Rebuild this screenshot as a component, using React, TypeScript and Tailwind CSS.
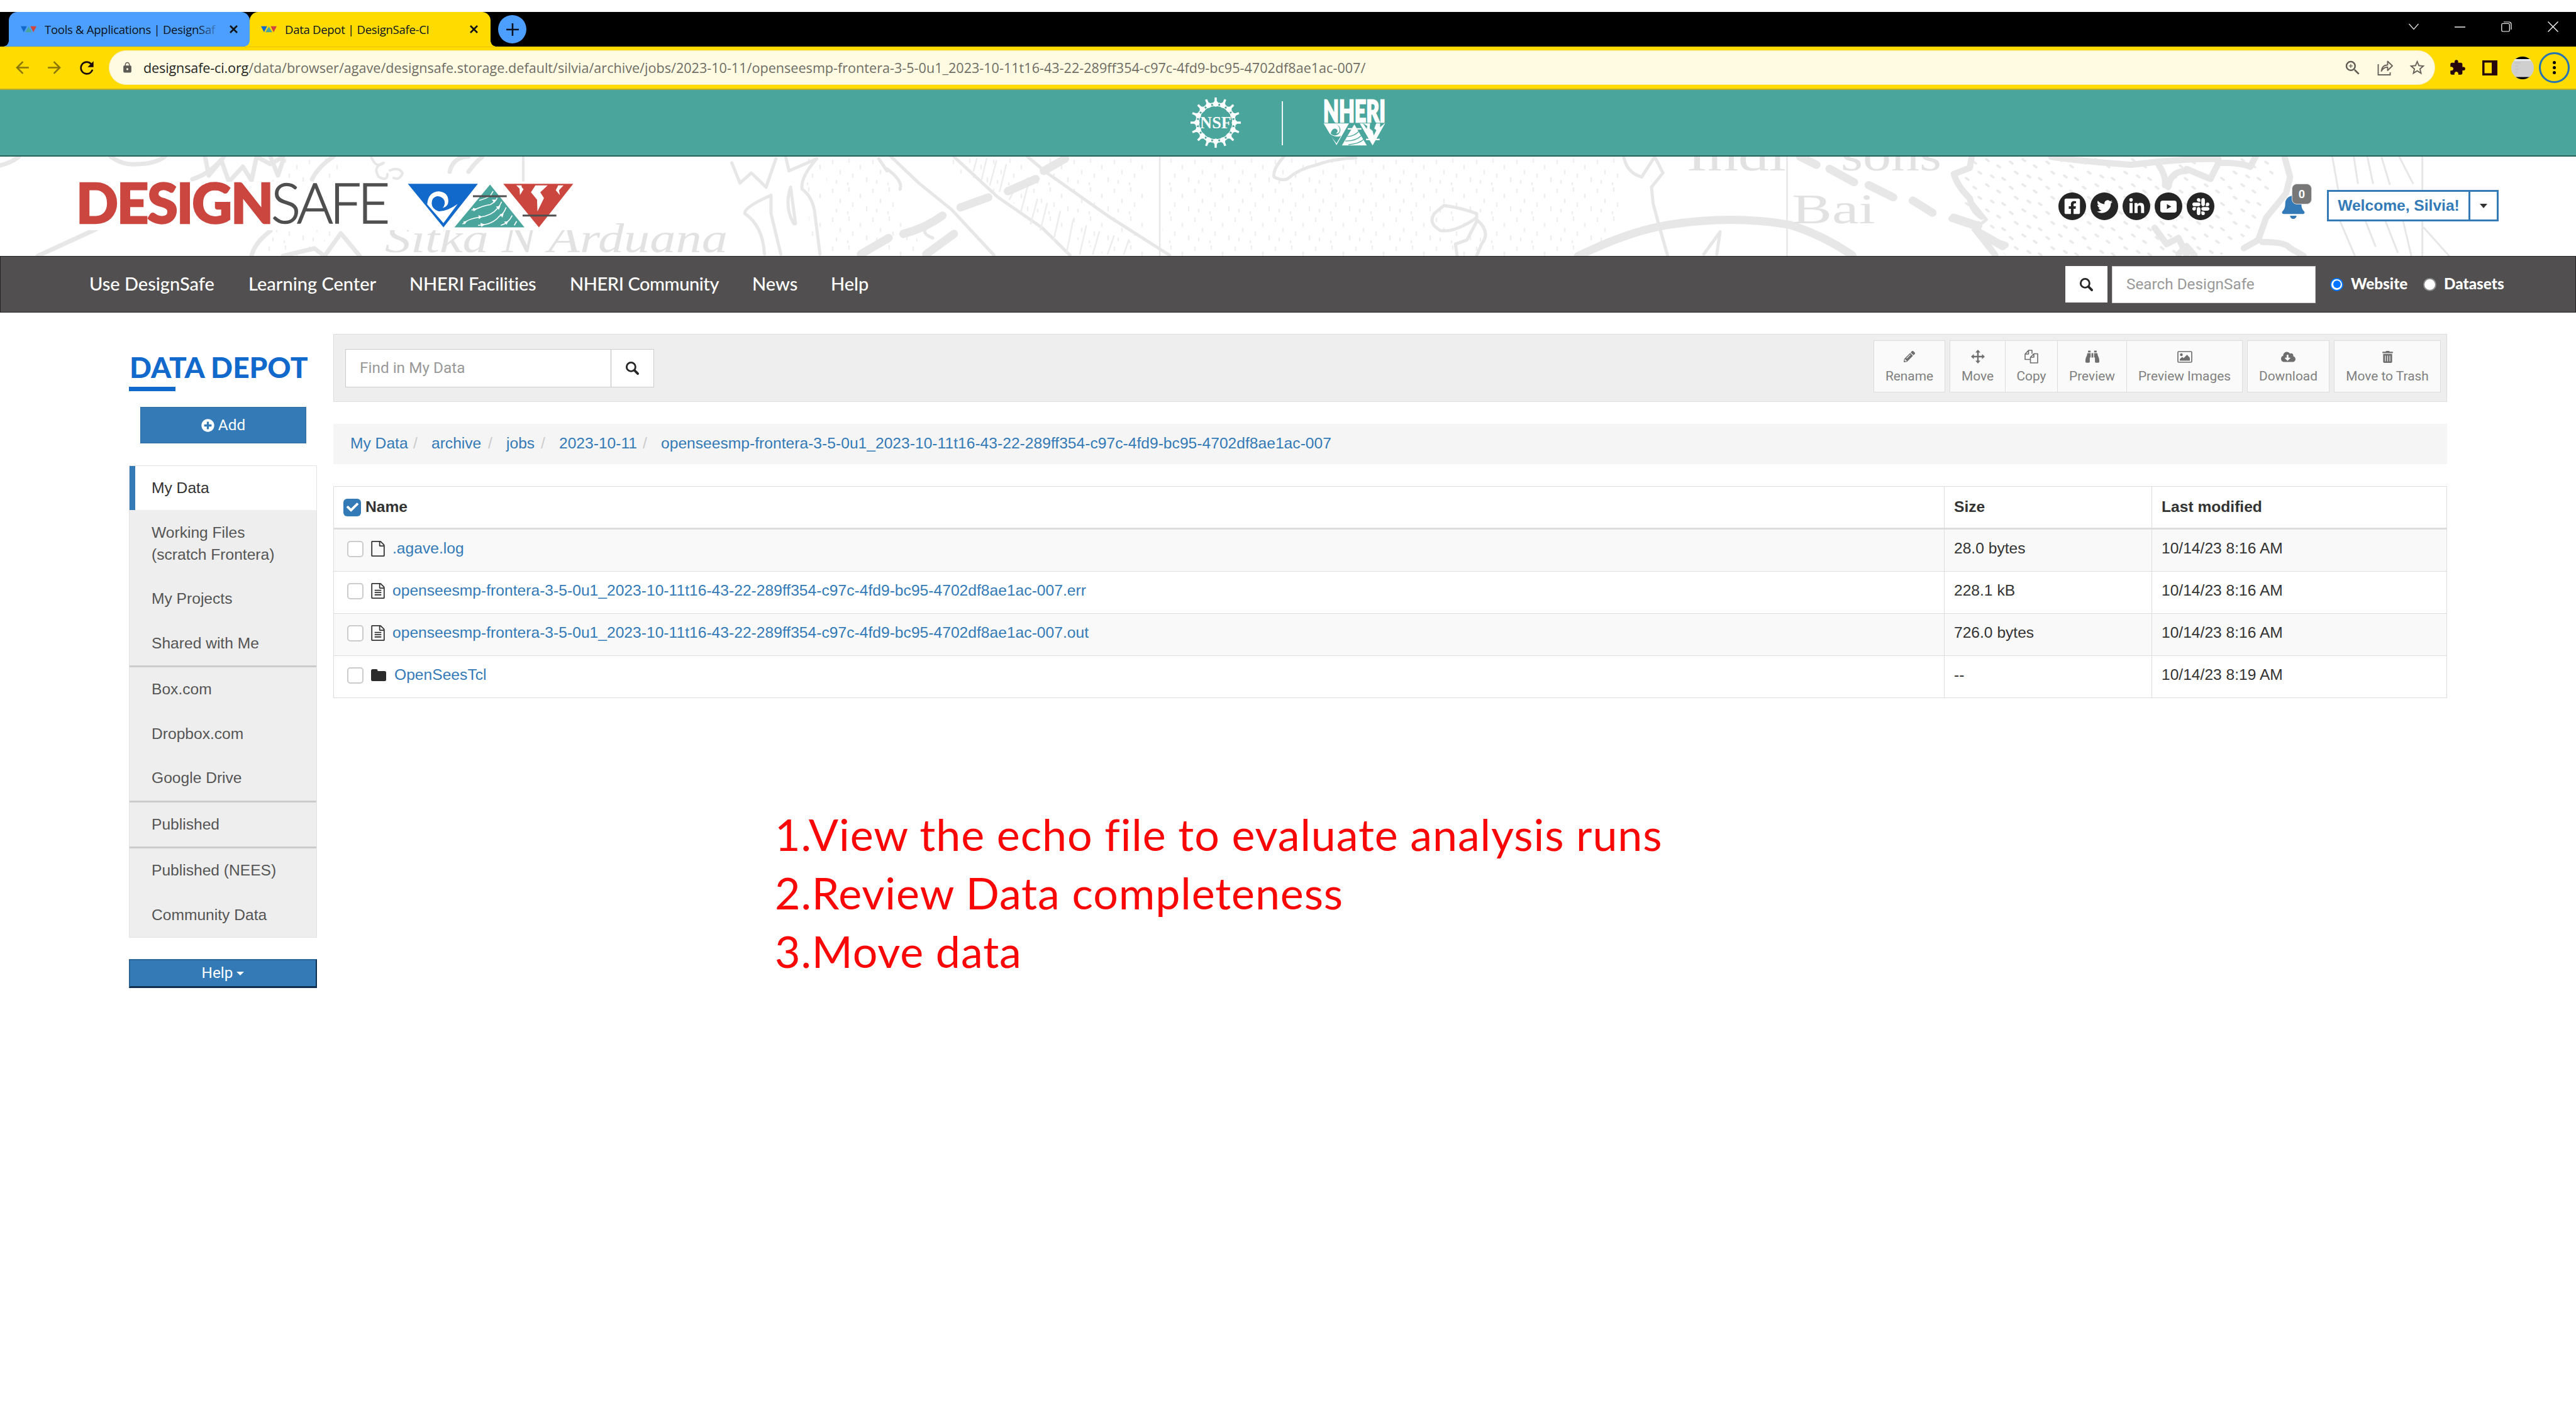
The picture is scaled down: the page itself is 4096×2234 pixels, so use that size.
import React from "react";
import { FaTwitter, FaSlack, FaBell, FaBinoculars, FaPlusCircle, FaCloudDownloadAlt, FaTrashAlt, FaPencilAlt, FaFacebookSquare, FaLinkedinIn, FaCheck } from "react-icons/fa";
import { MdExtension, MdLock, MdRefresh, MdStarBorder, MdZoomIn, MdArrowBack, MdArrowForward } from "react-icons/md";

const LONG = "openseesmp-frontera-3-5-0u1_2023-10-11t16-43-22-289ff354-c97c-4fd9-bc95-4702df8ae1ac-007";

const FILE_O =
  "M1596 380q28 28 48 76t20 88v1152q0 40-28 68t-68 28h-1344q-40 0-68-28t-28-68v-1600q0-40 28-68t68-28h896q40 0 88 20t76 48zm-444-244v376h376q-10-29-22-41l-313-313q-12-12-41-22zm384 1528v-1024h-416q-40 0-68-28t-28-68v-416h-768v1536h1280z";
const FILE_LINES =
  "m-1024-864q0-14 9-23t23-9h704q14 0 23 9t9 23v64q0 14-9 23t-23 9h-704q-14 0-23-9t-9-23v-64zm736 224q14 0 23 9t9 23v64q0 14-9 23t-23 9h-704q-14 0-23-9t-9-23v-64q0-14 9-23t23-9h704zm0 256q14 0 23 9t9 23v64q0 14-9 23t-23 9h-704q-14 0-23-9t-9-23v-64q0-14 9-23t23-9h704z";

function SearchIcon() {
  return (
    <svg className="size-[23px]" viewBox="0 0 24 24" fill="none" stroke="#262626" strokeLinecap="round">
      <circle cx="9.8" cy="9.8" r="7.3" strokeWidth="3" />
      <path d="M15.8 15.8 21 21" strokeWidth="4" />
    </svg>
  );
}

function Favicon({ className = "" }: { className?: string }) {
  return (
    <svg className={"h-[11px] w-[25px] " + className} viewBox="0 0 36 14">
      <path d="M0 0h14L7 14z" fill="#1269cc" />
      <path d="M18 1l8 13H10z" fill="#4ba69c" />
      <path d="M22 0h14l-7 14z" fill="#d1453f" />
    </svg>
  );
}

function CloseX() {
  return (
    <svg className="size-[13px]" viewBox="0 0 13 13" stroke="#111" strokeWidth="2.6">
      <path d="M1 1l11 11M12 1L1 12" />
    </svg>
  );
}

function TabStrip() {
  return (
    <div className="flex h-[55px] bg-black font-['Open_Sans'] text-[18.5px] tracking-[-0.27px] text-[#0b1220]">
      <div className="relative ml-[14px] flex h-full w-[383px] items-center rounded-t-[14px] bg-[#4d9fff]">
        <span className="absolute -left-[9px] bottom-0 size-[9px] bg-[radial-gradient(circle_at_0_0,#000_8.5px,#4d9fff_9px)]" />
        <Favicon className="ml-[19px]" />
        <span className="relative ml-[13px] w-[277px] overflow-hidden whitespace-nowrap leading-[30px]">
          Tools &amp; Applications | DesignSaf
          <span className="absolute inset-y-0 right-0 w-[34px] bg-linear-to-r from-[#4d9fff]/0 to-[#4d9fff]/90" />
        </span>
        <span className="ml-[17px]">
          <CloseX />
        </span>
      </div>
      <div className="relative flex h-full w-[383px] items-center rounded-t-[14px] bg-[#ffdb00]">
        <span className="absolute -left-[9px] bottom-0 size-[9px] bg-[radial-gradient(circle_at_0_0,#4d9fff_8.5px,#ffdb00_9px)]" />
        <span className="absolute -right-[9px] bottom-0 size-[9px] bg-[radial-gradient(circle_at_100%_0,#000_8.5px,#ffdb00_9px)]" />
        <Favicon className="ml-[18px]" />
        <span className="ml-[13px] w-[274px] whitespace-nowrap leading-[30px]">Data Depot | DesignSafe-CI</span>
        <span className="ml-[20px]">
          <CloseX />
        </span>
      </div>
      <div className="ml-[12px] mt-[5px] flex size-[45px] items-center justify-center rounded-full bg-[#4d9fff]">
        <svg className="size-[20px]" viewBox="0 0 20 20" stroke="#0b1220" strokeWidth="2.6">
          <path d="M10 0v20M0 10h20" />
        </svg>
      </div>
      <div className="ml-auto mr-[28px] flex h-[47px] items-center gap-[57px]">
        <svg className="h-[11px] w-[16px]" viewBox="0 0 16 11" fill="none" stroke="#ddd" strokeWidth="1.4"><path d="M.5 1 8 9.5 15.500 1" /></svg>
        <svg className="h-[2px] w-[17px]" viewBox="0 0 17 2" stroke="#fff" strokeWidth="1.4"><path d="M0 1h17" /></svg>
        <svg className="size-[17px]" viewBox="0 0 17 17" fill="none" stroke="#fff" strokeWidth="1.2"><rect x=".8" y="3.500" width="12.500" height="12.500" rx="1.800" /><path d="M4 1h8.500a3.500 3.500 0 0 1 3.500 3.500V13" /></svg>
        <svg className="size-[17px]" viewBox="0 0 17 17" stroke="#fff" strokeWidth="1.3"><path d="M.5.5l16 16M16.500.5l-16 16" /></svg>
      </div>
    </div>
  );
}

function AddressBar() {
  return (
    <div className="flex h-[69px] items-center border-y border-t-[#e6c500] border-b-2 border-b-[#b9ab30] bg-[#ffdb00] pb-px">
      <MdArrowBack className="ml-[20px] size-[31px] text-[#8a7705]" />
      <MdArrowForward className="ml-[20px] size-[31px] text-[#8a7705]" />
      <MdRefresh className="ml-[20px] size-[32px] text-[#1a0a05]" />
      <div className="ml-[19px] flex h-[55px] w-[3699px] items-center rounded-full border border-[#f5ecb0] bg-[#fffbe3]">
        <MdLock className="ml-[19px] size-[19px] text-[#5b5a55]" />
        <div className="ml-[16px] whitespace-nowrap font-['Open_Sans'] text-[21.600px] leading-[40px] text-[#6f6d63]">
          <span className="tracking-[-0.15px] text-[#26251f]">designsafe-ci.org</span>
          /data/browser/agave/designsafe.storage.default/silvia/archive/jobs/2023-10-11/openseesmp-frontera-3-5-0u1_2023-10-11t16-43-22-289ff354-c97c-4fd9-bc95-4702df8ae1ac-007/
        </div>
        <MdZoomIn className="ml-auto size-[30px] text-[#5e5c54]" />
        <svg className="ml-[24px] size-[25px]" viewBox="0 0 25 25" fill="none" stroke="#66645b" strokeWidth="1.900">
          <path d="M1.500 7v17h19v-4" />
          <path d="M6.500 18c.7-6.500 4-9.500 10-9.700V2.500l7.500 7.200-7.500 7.300v-5.300c-4.500 0-7.500 1.800-10 6.300z" strokeLinejoin="round" />
        </svg>
        <MdStarBorder className="ml-[24px] mr-[13px] size-[29px] text-[#66645b]" />
      </div>
      <MdExtension className="ml-[22px] size-[27px] text-[#26060c]" />
      <svg className="ml-[26px] size-[24px]" viewBox="0 0 24 24"><path fillRule="evenodd" d="M0 0h24v24H0zM3.500 3.500v17H15v-17z" fill="#26060c" /></svg>
      <svg className="ml-[22px] size-[36px]" viewBox="0 0 36 36">
        <clipPath id="avatar"><circle cx="18" cy="18" r="18" /></clipPath>
        <g clipPath="url(#avatar)">
          <path d="M0 0h36v36H0z" fill="#cfcfcf" />
          <path d="M0 0h36v4H0zM0 32.500h36V36H0z" fill="#000" />
          <path d="M0 4h36v2.500H0z" fill="#eef3fb" />
          <path d="M5 10h10M6 15h5M6 20h6M6 25h4" stroke="#bdbdbd" />
        </g>
      </svg>
      <div className="ml-[8px] flex size-[49px] flex-col items-center justify-center gap-[3px] rounded-full border-[3px] border-[#2474b5]">
        <span className="size-[5px] rounded-full bg-black" />
        <span className="size-[5px] rounded-full bg-black" />
        <span className="size-[5px] rounded-full bg-black" />
      </div>
    </div>
  );
}

const teeth = Array.from({ length: 16 }, (_, i) => i * 22.5);

function SponsorBar() {
  return (
    <div className="flex h-[106px] items-start border-b-2 border-[#25605a] bg-[#4aa59c]">
      <svg className="ml-[1893px] mt-[12px] size-[80px]" viewBox="-41 -41 82 82" fill="#fff">
        {teeth.map((a) => (
          <g key={a} transform={`rotate(${a})`}>
            <path d="M-5-30Q-4-33.500-1.900-35L-1.700-41h3.400L1.900-35Q4-33.500 5-30L3-27 0-26-3-27z" />
          </g>
        ))}
        <circle r="32" fill="none" stroke="#fff" strokeWidth="1.600" />
        <circle r="27.500" fill="none" stroke="#fff" strokeWidth="1.200" />
        <text y="9.500" textAnchor="middle" textLength="51" lengthAdjust="spacingAndGlyphs" fontFamily="Liberation Serif" fontWeight="700" fontSize="29">NSF</text>
      </svg>
      <div className="ml-[65px] mt-[18px] h-[70px] w-[2px] bg-white/90" />
      <svg className="ml-[64px] mt-[15px] h-[74px] w-[99px] overflow-visible" viewBox="0 0 300 224" fill="#fff">
        <text x="0" y="108" textLength="300" lengthAdjust="spacingAndGlyphs" fontFamily="Lato" fontWeight="900" fontSize="144" stroke="#fff" strokeWidth="7">NHERI</text>
        <path d="M2 116h122L64 220z" />
        <circle cx="56" cy="147" r="27" fill="#4aa59c" />
        <path d="M24 160l40 52 22-36q-30 12-62-16z" fill="#4aa59c" />
        <path d="M37 168a27 27 0 1 1 42-20q0 16-18 16 12-8 6-18-8-10-20-2-12 12-10 24z" fill="#fff" />
        <path d="M150 120l60 102H90z" />
        <path d="M118 142h66" stroke="#fff" strokeWidth="7" />
        <path d="M116 178q30 2 58-26M106 200q50 2 78-26M122 218q50-4 72-24" stroke="#4aa59c" strokeWidth="4" fill="none" />
        <path d="M176 116h122L238 222z" />
        <path d="M190 114l22 14-2 14zM226 114l30 0-10 26 10 8-12 26-6-22-14-12zM274 114l22 2-22 18z" fill="#4aa59c" />
        <path d="M206 193h66" stroke="#fff" strokeWidth="7" />
      </svg>
    </div>
  );
}

function MapBackdrop() {
  return (
    <svg className="absolute inset-0 h-full w-full" viewBox="0 0 4096 158" fill="none" stroke="#e7e7e7" strokeLinejoin="round" strokeLinecap="round">
      <defs>
        <pattern id="dashes" width="64" height="46" patternUnits="userSpaceOnUse">
          <path d="M6 4v5M24 14v5M44 6v5M56 22v5M12 28v5M34 34v6M50 38v4M4 42v3" stroke="#efefef" strokeWidth="2.500" />
        </pattern>
        <pattern id="dots" width="58" height="40" patternUnits="userSpaceOnUse">
          <path d="M6 8l4 3M26 4l4 3M44 14l4 3M14 24l4 3M34 30l4 3M52 34l4 3" stroke="#eaeaea" strokeWidth="3.500" />
        </pattern>
      </defs>
      <path d="M1312 0h100l0 40 60 118h-150zM1850 0h730l-6 40 4 70-40 48h-690zM1480 0h340v158h-60z" fill="url(#dashes)" stroke="none" />
      <path d="M430 0h110v120l-60 38h-70zM1280 0h30v158h-20z" fill="url(#dashes)" stroke="none" />
      <path d="M3110 40l30-40h480l-10 50-20 60-60 48h-340l-60-60z" fill="url(#dots)" stroke="none" />
      <g strokeWidth="7">
        <path d="M0 14Q18 10 30 0M176 0q20 14 40 12q30 0 46-12M60 158l100-46M400 158q4-20 30-40M450 158l50-12 16 12 26-36 30 36M306 36q30-10 50-36M326 0l6 30 20-24 12 34 22-24 14 22 8-38 22 12 20-12M430 0l12 30 8-24M496 36q10-20 34-36M715 24q6-24 30-24M745 24q10-14 22-24" />
        <path d="M590 0q8 20 20 10-18 6-8 22 14 8 14-4M620 22q14-6 20 4-4 12-14 8M832 0v38" strokeWidth="4" />
      </g>
      <g transform="matrix(1.2987 0 0 .323 1163.6 -16)">
        <g strokeWidth="5">
          <path vectorEffect="non-scaling-stroke" d="M0 80l10 100 14-50 18 70 12-140M66 50l4 70 34-60q-20 90-18 150 14 40 16 130l6 190M48 240q-34 60-32 90 22 60 24 200M48 240l0 90 12 200M72 200l6 180M72 200q-8 100 4 180" />
          <path vectorEffect="non-scaling-stroke" d="M195 50l34 130 40 130 52 225M272 50l54 200 54 150 34 135M362 50l24 80 74 210 76 195M180 60l10 60M190 110q20 60 16 100M246 380q-20 40 0 70" />
          <path vectorEffect="non-scaling-stroke" d="M676 50q-14 60-12 100 10 20 16 10 14-50 36-70 20-30 48-34M872 290l-12 40q-8 50 8 84 18 10 44-64M872 290q20 10 40 40v40l-12 90-14 20 2 58M912 360q18 60 6 120l-6 58" />
          <path vectorEffect="non-scaling-stroke" d="M1092 50q4 80 22 100l16-100M1130 50l10 80-14 70 2 80 6 90 12 170M1190 530l20-110-4 110" />
          <path vectorEffect="non-scaling-stroke" d="M1520 50l-4 60-18 20q0 60 12 100l26 130-16 50 26 130" />
        </g>
        <g strokeWidth="2.500">
          <path vectorEffect="non-scaling-stroke" d="M524 50v490M1292 50v490" />
          <path vectorEffect="non-scaling-stroke" d="M300 60l-4 60M312 60l-6 100M324 70l-8 120M336 90l-8 130M350 180l-10 80M362 200l-8 120M374 260l-8 120M386 280l-8 130M402 320l-8 140M418 360l-8 160M434 390l-8 140M450 420l-8 110M468 440l-8 90M486 460l-6 70" stroke="#ededed" />
        </g>
        <g strokeWidth="13">
          <path vectorEffect="non-scaling-stroke" d="M408 60l-26 60M372 160l-34 60M314 250l-34 50M258 340q-20 60-48 90M192 450l-34 80M272 430l-34 100M1036 540q60-120 110-154 80-50 150 0 40 50 76 150M1308 50l20 40M1344 110l30 66M1392 190l30 60M1446 266l24 60M1496 350l30 40M1530 430l26 60" />
        </g>
      </g>
      <g transform="matrix(.6334 0 0 .323 3103 -16)" strokeWidth="10">
        <path vectorEffect="non-scaling-stroke" d="M50 55l-4 50-40 30q8 60 40 120 6 60 30 90M0 355l60 40 26 60 50 30M60 395l20 60 30 80M250 50q60 20 200 40 120-30 220-30M520 90q20 60 16 100M590 120q-40 0-46 80M590 110l60 50 20-80q60 0 80 20l16-60M836 50l14 100-10 80-50 120-20 110-36 40M780 470q60 0 70 30l34 38M510 400l30 80 30-30 20 85M570 530l20-40 20 45" />
        <path vectorEffect="non-scaling-stroke" strokeWidth="3" d="M956 50l18 200M1010 50l10 130M1044 50l14 130M1080 55l20 130M1124 50l34 130M1182 50v490M976 370l36 165M1040 370l24 120M1090 370l30 150M1134 370l20 165M1186 400l64 140" />
      </g>
      <g stroke="none" fill="#e2e2e2" fontFamily="Liberation Serif">
        <text x="612" y="152" fontSize="66" fontStyle="italic" textLength="545" lengthAdjust="spacingAndGlyphs">Sitka N Arduana</text>
        <text x="2682" y="22" fontSize="72" textLength="158" lengthAdjust="spacingAndGlyphs">Indi</text>
        <text x="2927" y="22" fontSize="72" textLength="160" lengthAdjust="spacingAndGlyphs">sons</text>
        <text x="2849" y="106" fontSize="68" textLength="133" lengthAdjust="spacingAndGlyphs">Bai</text>
      </g>
    </svg>
  );
}

function LogoMark() {
  return (
    <svg className="h-[77px] w-[301px] shrink-0" viewBox="0 54 930 238">
      <path d="M57 64h344L232 278z" fill="#1269cc" />
      <path d="M152 165q4-60 56-64 48 4 48 48 0 26-28 34 16-20 8-38-12-22-36-20-26 6-26 36 2 28 34 38 40 2 94-36l-70 94z" fill="#fff" />
      <path d="M461 68l169 210H286z" fill="#4aa59c" />
      <g stroke="#fff" strokeWidth="5" fill="none">
        <path d="M370 193q20-2 40-12 30-12 52-14 28-16 34-34M408 146q30-8 54-22l14-24M326 262q30-28 86-34 60-10 84-42 14-14 22-34M402 268q70-2 104-44 24-14 34-44M514 268q36-8 56-48M580 268l12-20" />
      </g>
      <path d="M376 182l22 6-18 12zM470 142l18 0-6 16zM330 248l16 2-10 14zM404 218l18 8-16 12zM490 176l22-4-8 20zM414 256l22 8-18 12zM508 214l20-4-6 20zM530 250l20-2-8 18z" fill="#fff" />
      <path d="M526 64h344L701 278z" fill="#cb463f" />
      <path d="M590 72h26q-2 10 10 18l-18 30-2-32zM684 72h60l-36 34 18 28-32 66-2-58-30-36zM796 72h26l-22 24 4 24-20-24z" fill="#fff" />
      <path d="M377 125h166M621 220h166" stroke="#4f4f4f" strokeWidth="9" />
    </svg>
  );
}

function Social({ children }: { children: React.ReactNode }) {
  return <span className="flex size-[44px] items-center justify-center rounded-full bg-[#252525] text-white">{children}</span>;
}

function Header() {
  return (
    <div className="relative flex h-[158px] items-start bg-white">
      <MapBackdrop />
      <div className="relative ml-[121px] mt-[40px] flex h-[77px] w-[810px] shrink-0 items-start whitespace-nowrap bg-white font-['Lato'] text-[88px] leading-[64px]">
        <span className="w-[310px] shrink-0 font-black tracking-[-2.100px] text-[#cb463f] [-webkit-text-stroke:2.500px_#cb463f]">DESIGN</span>
        <span className="w-[199px] shrink-0 font-light tracking-[-5.200px] text-[#4f4f4f] [-webkit-text-stroke:1.500px_#4f4f4f]">SAFE</span>
        <LogoMark />
      </div>
      <div className="relative ml-auto mr-[123px] flex items-start">
        <div className="mt-[57px] flex gap-[7px]">
          <Social><FaFacebookSquare className="size-[28px]" /></Social>
          <Social><FaTwitter className="size-[25px]" /></Social>
          <Social><FaLinkedinIn className="size-[27px]" /></Social>
          <Social>
            <svg className="h-[19px] w-[26px]" viewBox="0 0 26 19"><path fillRule="evenodd" d="M4 0h18q4 0 4 4v11q0 4-4 4H4q-4 0-4-4V4q0-4 4-4zm6.500 5.500v8l7-4z" fill="#fff" /></svg>
          </Social>
          <Social><FaSlack className="size-[31px]" /></Social>
        </div>
        <div className="relative ml-[105px] mt-[58px]">
          <FaBell className="size-[41px] text-[#337ab7]" />
          <span className="absolute -top-[15px] left-[18px] flex h-[33px] w-[32px] items-center justify-center rounded-[8px] border border-[#ddd] bg-[#777] font-['Roboto'] text-[18px] font-bold text-white">0</span>
        </div>
        <div className="ml-[33px] mt-[53px] flex h-[50px] w-[273px] border-[3px] border-[#337ab7] bg-white">
          <span className="flex w-[225px] items-center justify-center border-r-[3px] border-[#337ab7] font-['Liberation_Sans'] text-[24.600px] font-bold text-[#337ab7]">Welcome, Silvia!</span>
          <span className="flex flex-1 items-center justify-center">
            <svg className="h-[7px] w-[12px]" viewBox="0 0 12 7"><path d="M0 0h12L6 7z" fill="#333" /></svg>
          </span>
        </div>
      </div>
    </div>
  );
}

function NavBar() {
  return (
    <div className="flex h-[90px] items-center border border-[#262324] bg-[#524f50] font-['Lato'] text-white">
      <nav className="mb-[2px] ml-[141px] flex whitespace-nowrap text-[29px] font-medium leading-[40px]">
        <span className="w-[253px]">Use DesignSafe</span>
        <span className="w-[256px]">Learning Center</span>
        <span className="w-[255px] tracking-[-0.170px]">NHERI Facilities</span>
        <span className="w-[290px] tracking-[-0.430px]">NHERI Community</span>
        <span className="w-[125px]">News</span>
        <span>Help</span>
      </nav>
      <div className="ml-auto flex items-center whitespace-nowrap text-[24.300px] font-black">
        <span className="flex h-[58px] w-[67px] items-center justify-center bg-white"><SearchIcon /></span>
        <span className="ml-[7px] flex h-[59px] w-[324px] items-center border border-[#ccc] bg-white pl-[22px] font-['Roboto'] font-normal text-[#999]">Search DesignSafe</span>
        <span className="ml-[23px] flex size-[21px] items-center justify-center rounded-full border-[2.500px] border-[#0075ff] bg-white"><span className="size-[12px] rounded-full bg-[#0075ff]" /></span>
        <span className="mb-[2px] ml-[12px] w-[90px]">Website</span>
        <span className="ml-[25px] size-[21px] rounded-full border-2 border-[#8a8a8a] bg-white" />
        <span className="mb-[2px] ml-[12px] mr-[113px] w-[96px]">Datasets</span>
      </div>
    </div>
  );
}

const groups = [
  ["My Data", "Working Files\n(scratch Frontera)", "My Projects", "Shared with Me"],
  ["Box.com", "Dropbox.com", "Google Drive"],
  ["Published"],
  ["Published (NEES)", "Community Data"],
];

function Sidebar() {
  return (
    <aside className="w-[299px] pt-[62px]">
      <h1 className="whitespace-nowrap pl-px font-['Lato'] text-[46px] font-black leading-[50px] text-[#1269cc]">DATA DEPOT</h1>
      <div className="mt-[6px] h-[7px] w-[74px] bg-[#1269cc]" />
      <div className="ml-[18px] mt-[25px] flex h-[58px] w-[264px] items-center justify-center gap-[6px] border border-[#2e6da4] bg-[#337ab7] font-['Roboto'] text-[24.300px] text-white">
        <FaPlusCircle className="size-[21px]" />
        Add
      </div>
      <div className="mt-[35px] border border-[#e3e3e3] bg-[#eee] font-['Liberation_Sans'] text-[24.600px] leading-[35.300px] text-[#555]">
        {groups.map((g, i) => (
          <div key={i} className={i ? "border-t-[3px] border-[#ccc]" : ""}>
            {g.map((t) => (
              <div
                key={t}
                className={
                  "whitespace-pre border-l-[9px] pb-[18px] pl-[26px] pt-[17.200px] " +
                  (t === "My Data" ? "border-[#337ab7] bg-white text-[#333]" : "border-transparent")
                }
              >
                {t}
              </div>
            ))}
          </div>
        ))}
      </div>
      <div className="mt-[34px] flex h-[46px] items-center justify-center gap-[6px] border-2 border-b-[3px] border-b-[#0d2f4d] border-l-[#2a6394] border-r-[#0d2f4d] border-t-[#2a6394] bg-[#337ab7] font-['Roboto'] text-[24.300px] text-white">
        Help
        <svg className="h-[6px] w-[12px]" viewBox="0 0 12 6"><path d="M0 0h12L6 6z" fill="#fff" /></svg>
      </div>
    </aside>
  );
}

function Tool({ icon, label, className }: { icon: React.ReactNode; label: string; className: string }) {
  return (
    <div className={"flex h-[83px] flex-col items-center border border-[#ddd] bg-[#fafafa] pt-[14px] font-['Roboto'] text-[20.900px] text-[#808080] " + className}>
      <span className="flex h-[22px] items-center text-[#6e6e6e]">{icon}</span>
      <span className="mt-[7px] whitespace-nowrap leading-[26px]">{label}</span>
    </div>
  );
}

function MoveIcon() {
  return (
    <svg className="size-[22px]" viewBox="0 0 22 22" fill="currentColor">
      <path d="M11 0l4 4.500h-2.800v5.300h5.300V7L22 11l-4.500 4v-2.800h-5.300v5.300H15L11 22l-4-4.500h2.800v-5.300H4.500V15L0 11l4.500-4v2.800h5.300V4.500H7z" />
    </svg>
  );
}

function CopyIcon() {
  return (
    <svg className="size-[22px]" viewBox="0 0 22 22" fill="none" stroke="currentColor" strokeWidth="1.600" strokeLinejoin="round">
      <path d="M9 15.500H1V7l5.500-6H12v5.500M6.500 1v6H1M9.500 21h11.500V6.500h-6L9.500 12zM15 6.500V12H9.500" />
    </svg>
  );
}

function PictureIcon() {
  return (
    <svg className="h-[19px] w-[24px]" viewBox="0 0 24 19">
      <rect x="1" y="1" width="22" height="17" rx="1.500" fill="none" stroke="currentColor" strokeWidth="1.700" />
      <circle cx="6.500" cy="6" r="2.200" fill="currentColor" />
      <path d="M4 15.500v-2.500l4-3.500 2 2 5.500-5.500 4.500 5v4.500z" fill="currentColor" />
    </svg>
  );
}

function Toolbar() {
  return (
    <div className="flex h-[108px] border border-[#ddd] bg-[#eee]">
      <div className="ml-[18px] mt-[23px] flex h-[61px] w-[491px] border border-[#ccc] bg-white font-['Roboto'] text-[24.400px] text-[#999]">
        <span className="flex w-[422px] items-center border-r border-[#bbb] pl-[22px]">Find in My Data</span>
        <span className="flex flex-1 items-center justify-center"><SearchIcon /></span>
      </div>
      <div className="ml-auto mr-[9px] mt-[9px] flex">
        <Tool className="mr-[7px] w-[114px]" label="Rename" icon={<FaPencilAlt className="size-[18px]" />} />
        <Tool className="w-[89px]" label="Move" icon={<MoveIcon />} />
        <Tool className="-ml-px w-[84px]" label="Copy" icon={<CopyIcon />} />
        <Tool className="-ml-px w-[111px]" label="Preview" icon={<FaBinoculars className="size-[22px]" />} />
        <Tool className="-ml-px w-[185px]" label="Preview Images" icon={<PictureIcon />} />
        <Tool className="ml-[7px] w-[131px]" label="Download" icon={<FaCloudDownloadAlt className="size-[23px]" />} />
        <Tool className="ml-[7px] w-[170px]" label="Move to Trash" icon={<FaTrashAlt className="size-[19px]" />} />
      </div>
    </div>
  );
}

const crumbs: [string, string][] = [
  ["My Data", "w-[100px]"],
  ["archive", "w-[90px]"],
  ["jobs", "w-[55px]"],
  ["2023-10-11", "w-[133px]"],
];

function Breadcrumb() {
  return (
    <div className="mt-[35px] flex h-[64px] items-center whitespace-nowrap bg-[#f5f5f5] pb-px pl-[27px] text-[24.600px] text-[#337ab7]">
      {crumbs.map(([c, w]) => (
        <span key={c} className="flex">
          <span className={w}>{c}</span>
          <span className="w-[29px] text-[#ccc]">/</span>
        </span>
      ))}
      <span className="tracking-[0.020px]">{LONG}</span>
    </div>
  );
}

const files = [
  { name: ".agave.log", size: "28.0 bytes", date: "10/14/23 8:16 AM", kind: "file" },
  { name: LONG + ".err", size: "228.1 kB", date: "10/14/23 8:16 AM", kind: "text" },
  { name: LONG + ".out", size: "726.0 bytes", date: "10/14/23 8:16 AM", kind: "text" },
  { name: "OpenSeesTcl", size: "--", date: "10/14/23 8:19 AM", kind: "folder" },
];

function FileIcon({ kind }: { kind: string }) {
  if (kind === "folder")
    return (
      <svg className="mr-[13px] h-[19px] w-[24px]" viewBox="0 0 24 19"><path d="M2.500 0h6q2 0 2 2v1h11q2.500 0 2.500 2.500v11q0 2.500-2.500 2.500h-19Q0 19 0 16.500v-14Q0 0 2.500 0z" fill="#2b2b2b" /></svg>
    );
  return (
    <svg className="mr-[12px] h-[25px] w-[22px]" viewBox="128 0 1536 1792" fill="#333"><path d={kind === "text" ? FILE_O + FILE_LINES : FILE_O} /></svg>
  );
}

function FileTable() {
  return (
    <div className="mt-[35px] border border-b-0 border-[#ddd] text-[24.600px] text-[#333]">
      <div className="grid h-[68px] grid-cols-[2561px_330px_1fr] border-b-[3px] border-[#ddd] font-bold">
        <span className="flex items-center border-r border-[#ddd] pl-[15px]">
          <span className="mr-[7px] flex size-[28px] items-center justify-center rounded-[6px] bg-[#337ab7]"><FaCheck className="size-[19px] text-white" /></span>
          Name
        </span>
        <span className="flex items-center border-r border-[#ddd] pl-[15px]">Size</span>
        <span className="flex items-center pl-[15px]">Last modified</span>
      </div>
      {files.map((f, i) => (
        <div key={f.name} className={"grid h-[67px] grid-cols-[2561px_330px_1fr] border-b border-[#ddd] " + (i % 2 ? "bg-white" : "bg-[#f9f9f9]")}>
          <span className="flex items-center border-r border-[#ddd] pb-[5px] pl-[21px] tracking-[0.020px] text-[#337ab7]">
            <span className="mr-[12px] size-[26px] rounded-[5px] border-2 border-[#ccc] bg-white" />
            <FileIcon kind={f.kind} />
            {f.name}
          </span>
          <span className="flex items-center border-r border-[#ddd] pb-[5px] pl-[15px]">{f.size}</span>
          <span className="flex items-center pb-[5px] pl-[15px]">{f.date}</span>
        </div>
      ))}
    </div>
  );
}

export default function App() {
  return (
    <div className="h-[2234px] w-[4096px] overflow-hidden bg-white pt-[19px]">
      <TabStrip />
      <AddressBar />
      <SponsorBar />
      <Header />
      <NavBar />
      <div className="flex pl-[205px]">
        <Sidebar />
        <main className="ml-[26px] w-[3361px] pt-[34px] font-['Liberation_Sans']">
          <Toolbar />
          <Breadcrumb />
          <FileTable />
          <div className="ml-[702px] mt-[170px] whitespace-nowrap font-['Lato'] text-[70px] leading-[93px] tracking-[0.870px] text-[#f90606]">
            <p>1.View the echo file to evaluate analysis runs</p>
            <p>2.Review Data completeness</p>
            <p>3.Move data</p>
          </div>
        </main>
      </div>
    </div>
  );
}
